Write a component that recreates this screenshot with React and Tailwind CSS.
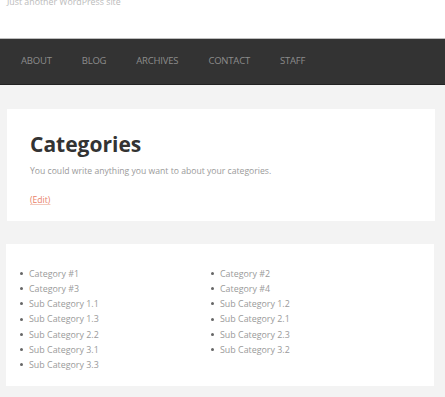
const NAV = ['About', 'Blog', 'Archives', 'Contact', 'Staff']

const CATS = [
    'Category #1', 'Category #2',
    'Category #3', 'Category #4',
    'Sub Category 1.1', 'Sub Category 1.2',
    'Sub Category 1.3', 'Sub Category 2.1',
    'Sub Category 2.2', 'Sub Category 2.3',
    'Sub Category 3.1', 'Sub Category 3.2',
    'Sub Category 3.3',
]

export default function App() {
    return (
        <div className="w-[445px] h-[397px] overflow-hidden bg-[#f3f3f3] font-['Open_Sans',sans-serif]">
            {/* Site header */}
            <div className="h-[38px] bg-white overflow-hidden">
                <p className="mt-[-4px] ml-[7px] text-[8.8px] leading-[12px] text-[#bbb]">Just another WordPress site</p>
            </div>

            {/* Main nav */}
            <nav className="h-[47px] bg-[#333] border-t border-[#bdbdbd] border-b border-b-[#222] flex items-center pl-[21px] gap-[30px]">
                {NAV.map(item => (
                    <a key={item} className="text-[9.5px] uppercase text-[#8c8c8c] tracking-[-0.2px]">{item}</a>
                ))}
            </nav>

            {/* Page intro */}
            <div className="mt-[24px] ml-[7px] w-[428px] h-[112px] bg-white pl-[23px] pt-[18px]">
                <h1 className="text-[21px] leading-[34px] font-bold text-[#333]">Categories</h1>
                <p className="mt-[3px] text-[8.65px] leading-[14px] text-[#9a9a9a]">You could write anything you want to about your categories.</p>
                <a className="inline-block mt-[15px] text-[8.65px] leading-[14px] text-[#e9826a] underline decoration-[#f2c9bd]">(Edit)</a>
            </div>

            {/* Category list */}
            <div className="mt-[23px] ml-[6px] w-[428px] h-[142px] bg-white pt-[22px] pl-[13px]">
                <ul className="grid grid-cols-[191px_191px]">
                    {CATS.map(c => (
                        <li key={c} className="flex items-center h-[15.2px] text-[8.9px] text-[#9a9a9a]">
                            <span className="w-[3px] h-[3px] rounded-full bg-[#666] ml-[1px] mr-[6px]"></span>
                            {c}
                        </li>
                    ))}
                </ul>
            </div>
        </div>
    )
}
